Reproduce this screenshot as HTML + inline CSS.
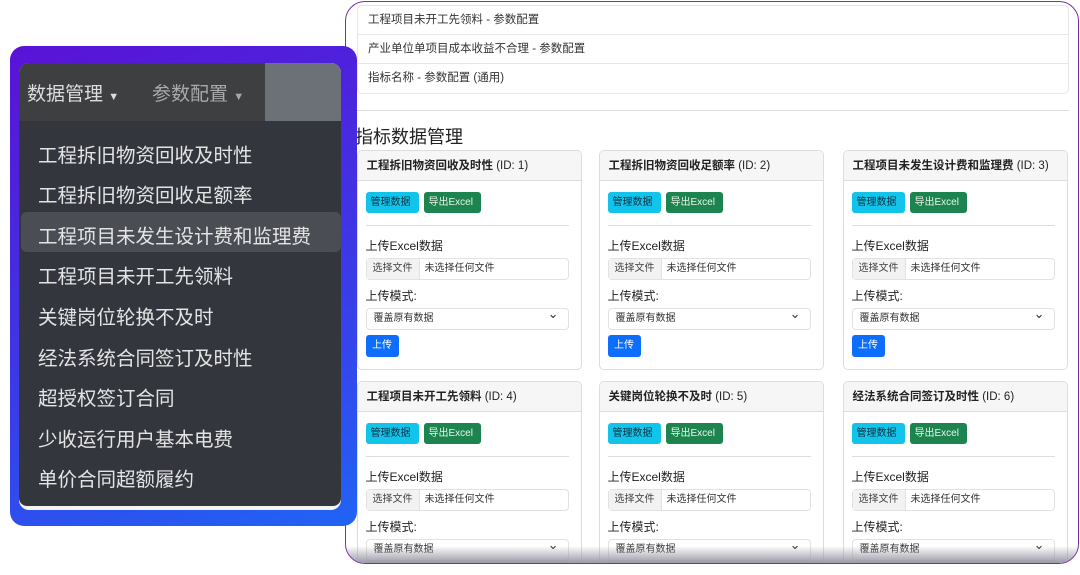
<!DOCTYPE html>
<html><head><meta charset="utf-8"><style>
*{box-sizing:border-box;margin:0;padding:0}
html,body{width:1080px;height:575px;overflow:hidden}
body{background:#fff;position:relative;font-family:"Liberation Sans","Noto Sans CJK SC",sans-serif;color:#222}
.rp{position:absolute;left:345px;top:1px;width:734px;height:563px;border:1.5px solid #7a2fa8;border-radius:20px;overflow:hidden;background:#fff}
.lst{position:absolute;left:11px;top:3px;width:712px;height:89px;border:1px solid #e6e6e6;border-radius:5px}
.lst div{height:29px;border-bottom:1px solid #e6e6e6;font-size:11.5px;line-height:29px;padding-left:10px;color:#333}
.lst div:last-child{border:none}
.hr0{position:absolute;left:11px;top:108px;width:712px;border-top:1px solid #ddd}
h2{position:absolute;left:9px;top:121px;font-size:18px;font-weight:normal;color:#222}
#cards{position:absolute;left:-346.5px;top:-2.5px;width:1080px;height:575px}
.card{position:absolute;width:225px;height:220px;border:1px solid #ddd;border-radius:5px;overflow:hidden;background:#fff}
.ch{height:30px;background:#f6f6f6;border-bottom:1px solid #ddd;font-size:11.5px;line-height:30px;padding-left:9px;font-weight:bold;color:#222}
.ch span{font-weight:normal}
.b{position:absolute;height:21px;font-size:10px;line-height:21px;padding:0 5px;border-radius:3px}
.cy{background:#12c3ea;color:#134;left:8px;top:41px;width:53px}
.gr{background:#1d8450;color:#e8f5e8;left:66px;top:41px;width:57px}
.hr{position:absolute;left:8px;top:74px;width:203px;border-top:1.5px solid #ddd}
.l{position:absolute;left:8px;font-size:12px;color:#222}
.fi{position:absolute;left:8px;top:107px;width:203px;height:22px;border:1px solid #e2e2e2;border-radius:4px;font-size:10px;line-height:20px;color:#333}
.fi i{font-style:normal;display:inline-block;background:#f2f2f2;border-right:1px solid #e2e2e2;padding:0 6px;color:#444}
.fi b{font-weight:normal;padding-left:5px}
.se{position:absolute;left:8px;top:157px;width:203px;height:22px;border:1px solid #e2e2e2;border-radius:4px;font-size:10px;line-height:20px;padding-left:7px;color:#333}
.se:after{content:"⌄";position:absolute;right:9px;top:-5px;font-size:13px}
.up{position:absolute;left:8px;top:184px;width:33px;height:22px;background:#0d6efd;color:#fff;font-size:10px;line-height:22px;text-align:center;border-radius:3px}
.fade{position:absolute;left:0;right:0;bottom:0;height:17px;background:linear-gradient(#fff0,#9a9aa6)}
.lp{position:absolute;left:10px;top:46px;width:347px;height:480px;border-radius:14px;background:linear-gradient(160deg,#5a12d6,#3a3ce8 60%,#2064f4)}
.in{position:absolute;left:9px;top:17px;width:322px;height:447px;border-radius:10px;overflow:hidden;background:#f3f3f3}
.nav{position:absolute;left:0;top:0;width:322px;height:58px;background:#6c7177}
.nb{position:absolute;left:0;top:0;width:246px;height:58px;background:#3e3f40}
.nt{position:absolute;top:16px;font-size:19px;color:#ddd}
.dd{position:absolute;left:0;top:58px;width:322px;height:385px;background:#33373d;border-radius:0 0 8px 8px}
.it{position:absolute;left:19px;font-size:19.5px;color:#e4e4e4;white-space:nowrap}
.hl{position:absolute;left:2px;top:91px;width:320px;height:40px;background:#4a4e54;border-radius:6px}
</style></head><body>
<div class="rp">
<div class="lst"><div>工程项目未开工先领料 - 参数配置</div><div>产业单位单项目成本收益不合理 - 参数配置</div><div>指标名称 - 参数配置 (通用)</div></div>
<div class="hr0"></div>
<h2>指标数据管理</h2>
<div id="cards"></div>
<div class="fade"></div>
</div>
<script>
var t=[["工程拆旧物资回收及时性",1],["工程拆旧物资回收足额率",2],["工程项目未发生设计费和监理费",3],["工程项目未开工先领料",4],["关键岗位轮换不及时",5],["经法系统合同签订及时性",6]];
var xs=[357,599,843],h="";
t.forEach(function(c,i){var x=xs[i%3],y=i<3?150:381;
h+='<div class="card" style="left:'+x+'px;top:'+y+'px"><div class="ch">'+c[0]+' <span>(ID: '+c[1]+')</span></div><div class="b cy">管理数据</div><div class="b gr">导出Excel</div><div class="hr"></div><div class="l" style="top:86px">上传Excel数据</div><div class="fi"><i>选择文件</i><b>未选择任何文件</b></div><div class="l" style="top:136px">上传模式:</div><div class="se">覆盖原有数据</div><div class="up">上传</div></div>';});
document.getElementById("cards").innerHTML=h;
</script>
<div class="lp"><div class="in">
<div class="nav"><div class="nb"></div>
<div class="nt" style="left:8px">数据管理 <span style="font-size:11px">▼</span></div>
<div class="nt" style="left:133px;color:#aaa">参数配置 <span style="font-size:11px">▼</span></div></div>
<div class="dd"><div class="hl"></div>
<div class="it" style="top:18px">工程拆旧物资回收及时性</div>
<div class="it" style="top:58px">工程拆旧物资回收足额率</div>
<div class="it" style="top:99px">工程项目未发生设计费和监理费</div>
<div class="it" style="top:139px">工程项目未开工先领料</div>
<div class="it" style="top:180px">关键岗位轮换不及时</div>
<div class="it" style="top:221px">经法系统合同签订及时性</div>
<div class="it" style="top:261px">超授权签订合同</div>
<div class="it" style="top:302px">少收运行用户基本电费</div>
<div class="it" style="top:342px">单价合同超额履约</div>
</div></div></div>
</body></html>
